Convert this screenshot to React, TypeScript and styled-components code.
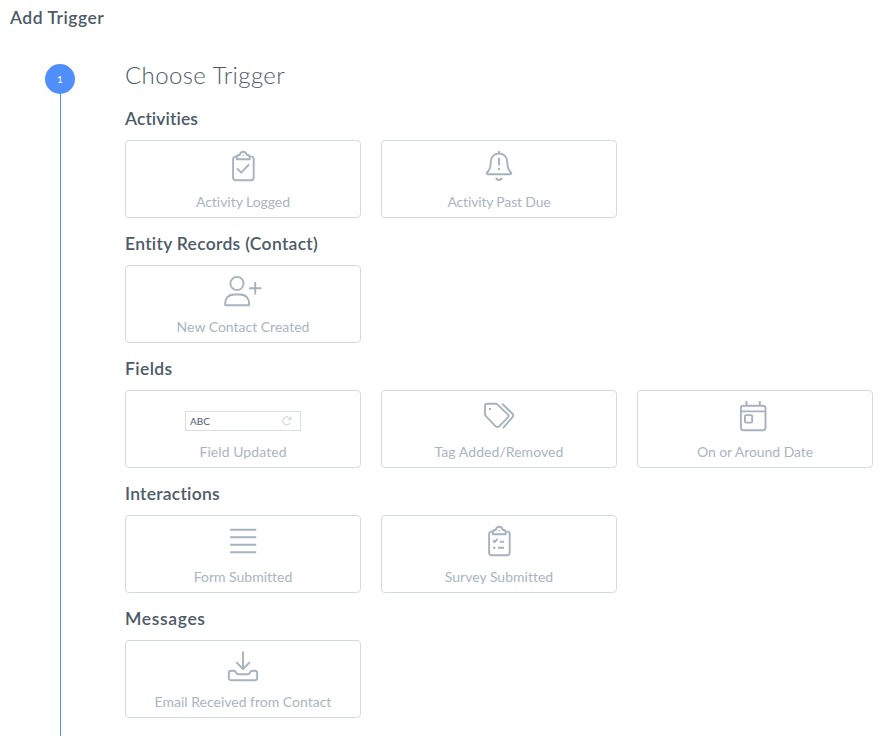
import React from "react";
import styled, { createGlobalStyle } from "styled-components";

type Trigger = {
  label: string;
  spacing: number;
  icon: React.ReactNode;
};

type Group = {
  title: string;
  spacing: number;
  triggers: Trigger[];
};

const Clipboard = ({ children }: { children: React.ReactNode }) => (
  <StyledIcon>
    <path d="M13.4 6.6h-.9a2.4 2.4 0 0 0-2.4 2.4v18.8a2.4 2.4 0 0 0 2.4 2.4h15.8a2.4 2.4 0 0 0 2.4-2.4V9a2.4 2.4 0 0 0-2.4-2.4h-.9" />
    <path d="M13.8 9.3V7.2c0-1.5 1-2.2 3-2.4.4-1.9 1.6-3 3.4-3s3 1.1 3.5 3c2 .2 3 .9 3 2.4v2.1z" />
    <circle cx="20.3" cy="5.5" r=".8" className="dot" />
    {children}
  </StyledIcon>
);

const ActivityIcon = () => (
  <Clipboard>
    <path d="M14 18.4l4.2 4.2 7.9-8.2" />
  </Clipboard>
);

const SurveyIcon = () => (
  <Clipboard>
    <path d="M13.9 15.4l1.8 1.6 2.9-3.2M20.8 16.7h4.3M19 22.7h6.1" />
    <circle cx="15.3" cy="22.7" r="1.2" className="dot" />
  </Clipboard>
);

const BellIcon = () => (
  <StyledIcon>
    <path d="M20 1v2.5M20 3.5c-5 0-8.2 3.5-8.2 8.3 0 5.4-.8 8-3.4 10.2-1 .9-.7 2.3.7 2.3h21.8c1.4 0 1.7-1.4.7-2.3-2.6-2.2-3.4-4.8-3.4-10.2 0-4.8-3.2-8.3-8.2-8.3z" />
    <path d="M20 7.8v7.8M17.2 27.8c.3 1.4 1.3 2.2 2.8 2.2s2.5-.8 2.8-2.2" />
    <circle cx="20" cy="19" r="1.2" className="dot" />
  </StyledIcon>
);

const ContactIcon = () => (
  <StyledIcon>
    <circle cx="14" cy="8.5" r="6.6" />
    <path d="M2.2 30.2c-.5-6.4 3-10.7 8.8-10.7h6.2c5.8 0 9.4 4.3 8.9 10.7zM26 13.2h12.4M32.2 7v12.4" />
  </StyledIcon>
);

const TagIcon = () => (
  <StyledIcon>
    <path d="M8 3.8h8.2c1 0 1.9.4 2.6 1.1l10 9.5c.9.9.9 2 .1 2.9l-8.8 9c-1 1-2.4 1-3.4 0L7.1 16.4c-.7-.7-1.1-1.5-1.1-2.5V5.8c0-1.2.8-2 2-2z" />
    <path d="M23.2 3.8l10 9.7c1.2 1.2 1.2 2.7.1 3.9L24 28.2" />
    <circle cx="11" cy="8.9" r="1.2" className="dot" />
  </StyledIcon>
);

const CalendarIcon = () => (
  <StyledIcon>
    <rect x="5.9" y="5.8" width="24.6" height="24.4" rx="2.4" />
    <rect x="9.9" y="15.1" width="7.3" height="7.5" rx="1.2" />
    <path d="M6 11.4h24.5M11.5 1v4.8M24.8 1v4.8" />
  </StyledIcon>
);

const FormIcon = () => (
  <StyledIcon>
    <path d="M7.2 4.7h26M7.2 12.2h26M7.2 19.7h26M7.2 27.2h26" />
  </StyledIcon>
);

const InboxIcon = () => (
  <StyledIcon>
    <path d="M20 1.4v17.4M13.2 12.1l6.8 6.9 6.9-6.9" />
    <path d="M8.2 20.7h2.3c1.4 0 2 .5 2.5 1.7.5 1.3 1.1 1.9 2.4 1.9h9.2c1.3 0 1.9-.6 2.4-1.9.5-1.2 1.1-1.7 2.5-1.7h2.3c1.6 0 2.4.8 2.4 2.4V28c0 1.5-.8 2.2-2.4 2.2H8.2c-1.6 0-2.4-.7-2.4-2.2v-4.9c0-1.6.8-2.4 2.4-2.4z" />
  </StyledIcon>
);

const FieldPreview = () => (
  <StyledField>
    <span>ABC</span>
    <svg width="10" height="10" viewBox="0 0 10 10">
      <path d="M8.4 6.5A4 4 0 1 1 8.1 2.7M8.9.7v2.7H6.2" />
    </svg>
  </StyledField>
);

const groups: Group[] = [
  {
    title: "Activities",
    spacing: 0.1,
    triggers: [
      { label: "Activity Logged", spacing: -0.04, icon: <ActivityIcon /> },
      { label: "Activity Past Due", spacing: -0.17, icon: <BellIcon /> },
    ],
  },
  {
    title: "Entity Records (Contact)",
    spacing: 0.29,
    triggers: [
      { label: "New Contact Created", spacing: 0, icon: <ContactIcon /> },
    ],
  },
  {
    title: "Fields",
    spacing: 0.4,
    triggers: [
      { label: "Field Updated", spacing: 0.07, icon: <FieldPreview /> },
      { label: "Tag Added/Removed", spacing: 0.06, icon: <TagIcon /> },
      { label: "On or Around Date", spacing: -0.06, icon: <CalendarIcon /> },
    ],
  },
  {
    title: "Interactions",
    spacing: 0.24,
    triggers: [
      { label: "Form Submitted", spacing: 0, icon: <FormIcon /> },
      { label: "Survey Submitted", spacing: 0, icon: <SurveyIcon /> },
    ],
  },
  {
    title: "Messages",
    spacing: 0.65,
    triggers: [
      { label: "Email Received from Contact", spacing: 0, icon: <InboxIcon /> },
    ],
  },
];

const App = () => {
  return (
    <StyledPage>
      <GlobalStyle />
      <StyledTitle>Add Trigger</StyledTitle>
      <StyledStep>
        <StyledRail>
          <StyledNumber>1</StyledNumber>
          <StyledLine />
        </StyledRail>
        <StyledContent>
          <StyledHeading>Choose Trigger</StyledHeading>
          {groups.map((group) => (
            <section key={group.title}>
              <StyledGroupTitle $spacing={group.spacing}>
                {group.title}
              </StyledGroupTitle>
              <StyledCards>
                {group.triggers.map((trigger) => (
                  <StyledCard key={trigger.label}>
                    {trigger.icon}
                    <StyledLabel $spacing={trigger.spacing}>
                      {trigger.label}
                    </StyledLabel>
                  </StyledCard>
                ))}
              </StyledCards>
            </section>
          ))}
        </StyledContent>
      </StyledStep>
    </StyledPage>
  );
};

const GlobalStyle = createGlobalStyle`
  * {
    box-sizing: border-box;
  }
  body {
    margin: 0;
    background: #ffffff;
    color: #4d5b68;
    font-family: Lato, "Liberation Sans", sans-serif;
    font-variant-ligatures: none;
  }
`;
const StyledPage = styled.main`
  height: 736px;
  overflow: hidden;
  display: flex;
  flex-direction: column;
`;
const StyledTitle = styled.h1`
  margin: 0;
  padding: 7px 10px 0;
  height: 64px;
  flex: none;
  font-size: 17.5px;
  font-weight: 600;
  line-height: 22px;
  letter-spacing: 0.5px;
`;
const StyledStep = styled.div`
  display: flex;
  flex: 1;
  min-height: 0;
  padding-left: 45px;
`;
const StyledRail = styled.div`
  display: flex;
  flex-direction: column;
  align-items: center;
  width: 30px;
  margin-right: 50px;
`;
const StyledNumber = styled.div`
  display: flex;
  align-items: center;
  justify-content: center;
  flex: none;
  width: 30px;
  height: 30px;
  border-radius: 50%;
  background: #508ef9;
  color: #ffffff;
  font-size: 10px;
`;
const StyledLine = styled.div`
  flex: 1;
  width: 1px;
  margin-left: 1px;
  background: #508ef9;
`;
const StyledContent = styled.div`
  flex: none;
`;
const StyledHeading = styled.h2`
  margin: 0;
  height: 45px;
  font-size: 24px;
  font-weight: 300;
  line-height: 21px;
  letter-spacing: 0.38px;
`;
const StyledGroupTitle = styled.h3<{ $spacing: number }>`
  margin: 0;
  height: 31px;
  font-size: 17.5px;
  font-weight: 600;
  line-height: 20px;
  letter-spacing: ${({ $spacing }) => $spacing}px;
`;
const StyledCards = styled.div`
  display: flex;
  gap: 20px;
  margin-bottom: 16px;
`;
const StyledCard = styled.div`
  display: flex;
  flex-direction: column;
  align-items: center;
  justify-content: space-between;
  width: 236px;
  height: 78px;
  padding: 9px 0 5px;
  border: 1px solid #d5dadf;
  border-radius: 4px;
  cursor: pointer;
`;
const StyledLabel = styled.span<{ $spacing: number }>`
  color: #a9b5c0;
  font-size: 14px;
  line-height: 20px;
  white-space: nowrap;
  letter-spacing: ${({ $spacing }) => $spacing}px;
`;
const StyledIcon = styled.svg.attrs({ viewBox: "0 0 40 32" })`
  width: 40px;
  height: 32px;
  fill: none;
  stroke: #a6b2bd;
  stroke-width: 1.9;
  stroke-linejoin: round;
  & .dot {
    fill: #a6b2bd;
    stroke: none;
  }
`;
const StyledField = styled.div`
  display: flex;
  align-items: center;
  justify-content: space-between;
  width: 116px;
  height: 20px;
  margin-top: 11px;
  padding: 0 8px 0 4px;
  border: 1px solid #d9dee2;
  color: #4d5b68;
  font-size: 10px;
  & svg {
    fill: none;
    stroke: #b9c0c7;
    stroke-width: 0.8;
  }
`;

export default App;
